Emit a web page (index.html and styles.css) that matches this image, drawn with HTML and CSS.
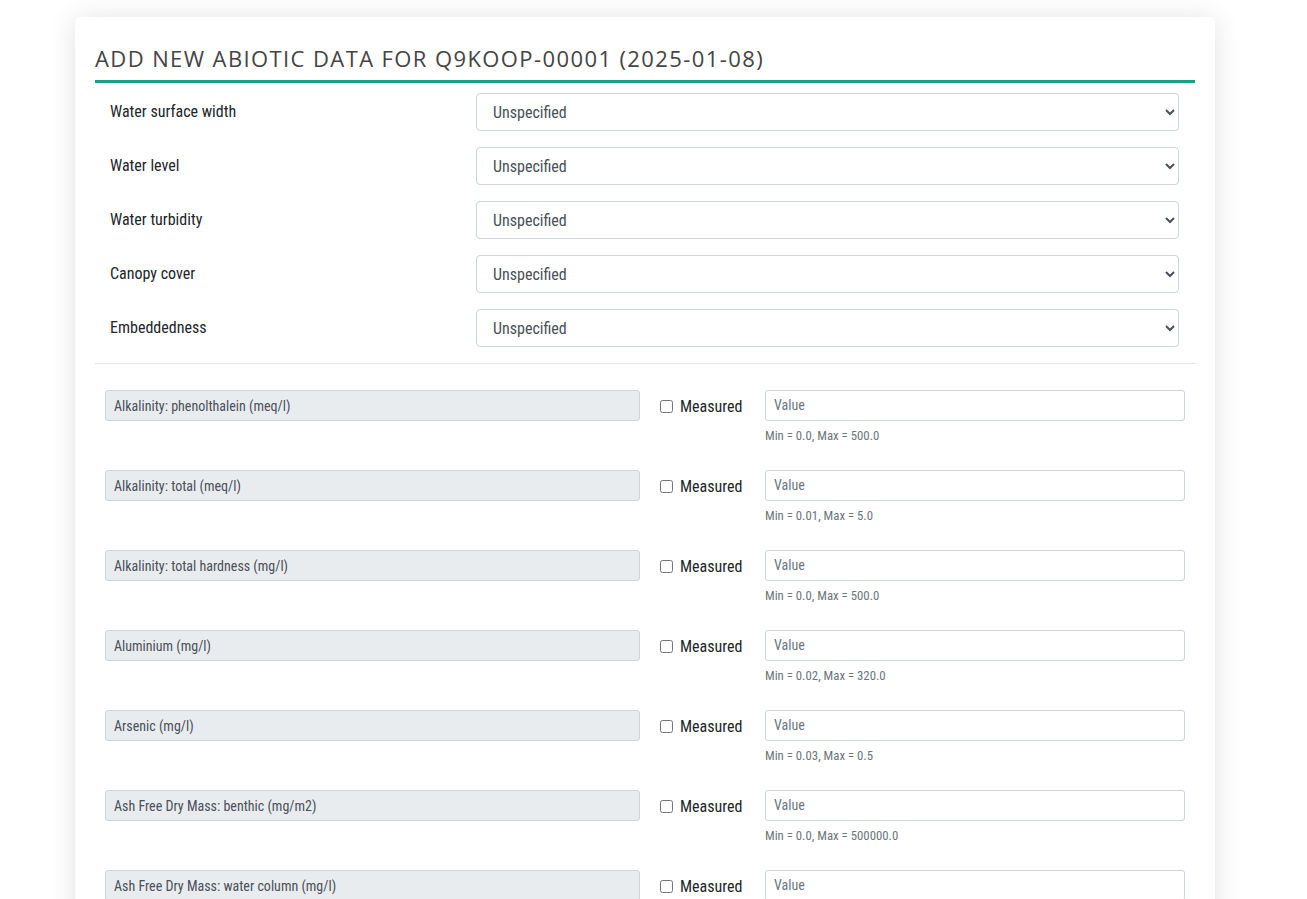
FILE: index.html
```html
<!DOCTYPE html>
<html lang="en">
<head>
<meta charset="utf-8">
<title>Add new abiotic data</title>
<link rel="stylesheet" href="styles.css">
</head>
<body>
<div class="card">
  <h2 class="title">Add new abiotic data for Q9KOOP-00001 (2025-01-08)</h2>

  <div class="selects">
    <div class="srow"><label class="slabel">Water surface width</label><select class="sel"><option>Unspecified</option></select></div>
    <div class="srow"><label class="slabel">Water level</label><select class="sel"><option>Unspecified</option></select></div>
    <div class="srow"><label class="slabel">Water turbidity</label><select class="sel"><option>Unspecified</option></select></div>
    <div class="srow"><label class="slabel">Canopy cover</label><select class="sel"><option>Unspecified</option></select></div>
    <div class="srow"><label class="slabel">Embeddedness</label><select class="sel"><option>Unspecified</option></select></div>
  </div>

  <hr class="divider">

  <div class="params">
    <div class="prow">
      <div class="pname">Alkalinity: phenolthalein (meq/l)</div>
      <label class="check"><input type="checkbox"> Measured</label>
      <div class="pval"><input class="inp" type="text" placeholder="Value"><small class="hint">Min = 0.0, Max = 500.0</small></div>
    </div>
    <div class="prow">
      <div class="pname">Alkalinity: total (meq/l)</div>
      <label class="check"><input type="checkbox"> Measured</label>
      <div class="pval"><input class="inp" type="text" placeholder="Value"><small class="hint">Min = 0.01, Max = 5.0</small></div>
    </div>
    <div class="prow">
      <div class="pname">Alkalinity: total hardness (mg/l)</div>
      <label class="check"><input type="checkbox"> Measured</label>
      <div class="pval"><input class="inp" type="text" placeholder="Value"><small class="hint">Min = 0.0, Max = 500.0</small></div>
    </div>
    <div class="prow">
      <div class="pname">Aluminium (mg/l)</div>
      <label class="check"><input type="checkbox"> Measured</label>
      <div class="pval"><input class="inp" type="text" placeholder="Value"><small class="hint">Min = 0.02, Max = 320.0</small></div>
    </div>
    <div class="prow">
      <div class="pname">Arsenic (mg/l)</div>
      <label class="check"><input type="checkbox"> Measured</label>
      <div class="pval"><input class="inp" type="text" placeholder="Value"><small class="hint">Min = 0.03, Max = 0.5</small></div>
    </div>
    <div class="prow">
      <div class="pname">Ash Free Dry Mass: benthic (mg/m2)</div>
      <label class="check"><input type="checkbox"> Measured</label>
      <div class="pval"><input class="inp" type="text" placeholder="Value"><small class="hint">Min = 0.0, Max = 500000.0</small></div>
    </div>
    <div class="prow">
      <div class="pname">Ash Free Dry Mass: water column (mg/l)</div>
      <label class="check"><input type="checkbox"> Measured</label>
      <div class="pval"><input class="inp" type="text" placeholder="Value"><small class="hint">Min = 0.0, Max = 50000.0</small></div>
    </div>
  </div>
</div>
</body>
</html>
```

FILE: styles.css
```css
html, body {
  margin: 0;
  padding: 0;
  background: #fff;
}
body {
  font-family: "Roboto Condensed", "Liberation Sans Narrow", Roboto, sans-serif;
  font-stretch: condensed;
  color: #212529;
}
.card {
  width: 1100px;
  margin: 17px 0 0 75px;
  padding: 26px 20px 20px;
  background: #fff;
  border-radius: 5px;
  box-shadow: 0 2px 28px rgba(0, 0, 0, 0.12);
}
.title {
  margin: 0;
  font-family: "Open Sans", sans-serif;
  font-stretch: normal;
  font-weight: 400;
  font-size: 22px;
  line-height: 30px;
  letter-spacing: 1.4px;
  text-transform: uppercase;
  color: #444;
  padding-bottom: 7px;
  border-bottom: 3px solid #16a085;
}
.selects {
  margin-top: 10px;
  display: flex;
  flex-direction: column;
  gap: 16px;
}
.srow {
  display: grid;
  grid-template-columns: 381px 703px;
  align-items: center;
}
.slabel {
  padding-left: 15px;
  margin-bottom: 2px;
  font-size: 16px;
  color: #212529;
}
.sel {
  height: 38px;
  padding: 0 12px;
  font-family: inherit;
  font-stretch: condensed;
  font-size: 16px;
  color: #495057;
  background-color: #fff;
  border: 1px solid #ced4da;
  border-radius: 4px;
}
.divider {
  margin: 16px 0 26px;
  border: 0;
  border-top: 1px solid #e3e3e3;
}
.params {
  display: flex;
  flex-direction: column;
  gap: 26px;
}
.prow {
  display: grid;
  grid-template-columns: 535px 85px 420px;
  column-gap: 20px;
  padding: 0 10px;
  align-items: start;
}
.pname {
  height: 31px;
  box-sizing: border-box;
  padding: 0 8px;
  display: flex;
  align-items: center;
  font-size: 14px;
  color: #495057;
  background: #e9ecef;
  border: 1px solid #ced4da;
  border-radius: 3px;
}
.check {
  height: 31px;
  box-sizing: border-box;
  padding-top: 2px;
  display: flex;
  align-items: center;
  gap: 7px;
  font-size: 16px;
  color: #212529;
  white-space: nowrap;
}
.check input {
  margin: 0;
  width: 13px;
  height: 13px;
}
.pval {
  display: flex;
  flex-direction: column;
}
.inp {
  height: 31px;
  box-sizing: border-box;
  padding: 0 8px 2px;
  font-family: inherit;
  font-stretch: condensed;
  font-size: 14px;
  color: #495057;
  border: 1px solid #ced4da;
  border-radius: 3px;
  outline: none;
}
.inp::placeholder {
  color: #6c757d;
}
.hint {
  margin-top: 7px;
  font-size: 12.8px;
  line-height: 16px;
  color: #6c757d;
}
```
